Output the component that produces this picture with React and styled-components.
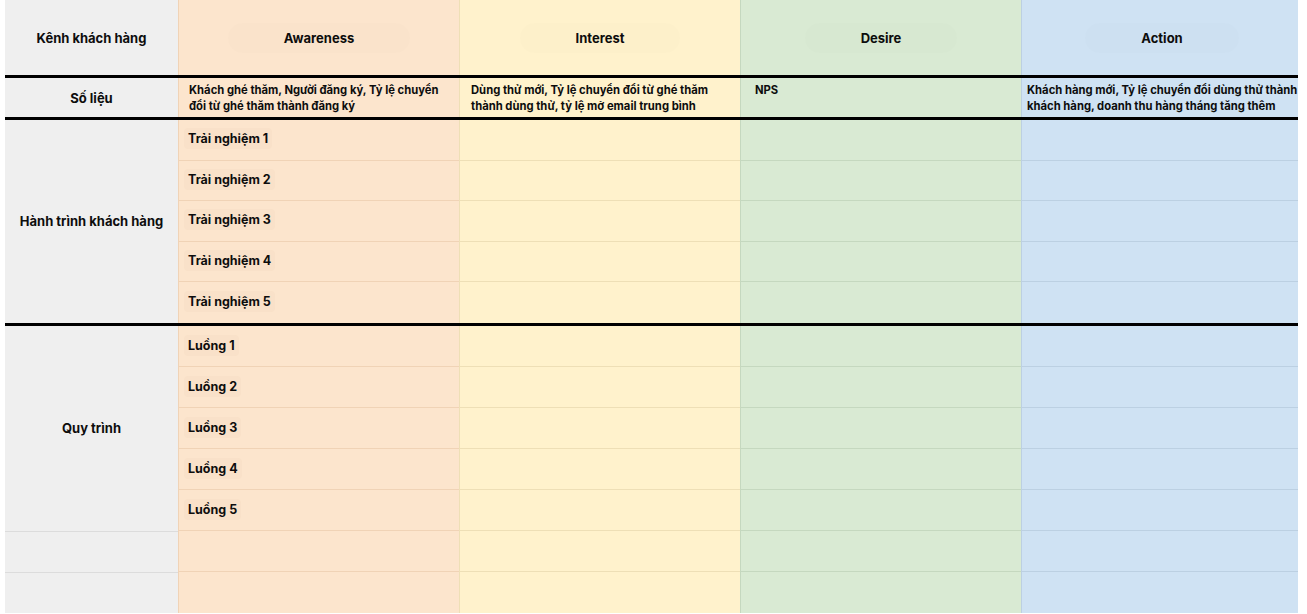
import React from 'react';
import styled, { createGlobalStyle } from 'styled-components';

const GlobalStyle = createGlobalStyle`
	html, body {
		margin: 0;
		padding: 0;
		background: #ffffff;
	}
	body {
		font-family: Inter, "Noto Sans", "Liberation Sans", sans-serif;
		color: #0d0d0d;
	}
`;

const STAGES = [
	{ name: 'Awareness', color: '#fce5cd', line: '#f0d3b6', metric: ['Khách ghé thăm, Người đăng ký, Tỷ lệ chuyển', 'đổi từ ghé thăm thành đăng ký'], pad: 10 },
	{ name: 'Interest', color: '#fff2cc', line: '#eedfb6', metric: ['Dùng thử mới, Tỷ lệ chuyển đổi từ ghé thăm', 'thành dùng thử, tỷ lệ mở email trung bình'], pad: 11 },
	{ name: 'Desire', color: '#d9ead3', line: '#c5d8bf', metric: ['NPS'], pad: 14 },
	{ name: 'Action', color: '#cfe2f3', line: '#bcd0e2', metric: ['Khách hàng mới, Tỷ lệ chuyển đổi dùng thử thành', 'khách hàng, doanh thu hàng tháng tăng thêm'], pad: 5 },
];

const JOURNEY = ['Trải nghiệm 1', 'Trải nghiệm 2', 'Trải nghiệm 3', 'Trải nghiệm 4', 'Trải nghiệm 5'];
const FLOWS = ['Luồng 1', 'Luồng 2', 'Luồng 3', 'Luồng 4', 'Luồng 5'];

const Page = styled.div`
	padding-left: 5px;
	width: 1293px;
	overflow: hidden;
`;

const Board = styled.div`
	display: grid;
	width: 1297px;
	grid-template-columns: 173px repeat(4, 281px);
	grid-template-rows: 75px 3px 39px 3px repeat(5, 40.6px) 3px repeat(7, 41px);
`;

const Divider = styled.div`
	grid-column: 1 / -1;
	background: #000000;
`;

const LabelCell = styled.div`
	grid-column: 1;
	grid-row: ${p => p.$row} / span ${p => p.$span || 1};
	background: #efefef;
	display: flex;
	align-items: center;
	justify-content: center;
	font-size: 13px;
	font-weight: 700;
	border-top: ${p => (p.$lined ? '1px solid #dcdcdc' : 'none')};
	box-sizing: border-box;
`;

const StageCell = styled.div`
	grid-column: ${p => p.$col};
	grid-row: ${p => p.$row};
	background: ${p => p.$color};
	border-left: 1px solid ${p => p.$line};
	border-bottom: ${p => (p.$lined ? `1px solid ${p.$line}` : 'none')};
	box-sizing: border-box;
	display: flex;
	align-items: center;
	min-width: 0;
`;

const HeaderCell = styled(StageCell)`
	justify-content: center;
`;

const HeaderTitle = styled.span`
	font-size: 13px;
	font-weight: 700;
	padding: 7px 56px;
	border-radius: 14px;
	background: rgba(0, 0, 0, 0.008);
`;

const MetricCell = styled(StageCell)`
	align-items: flex-start;
	padding: 5px 0 0 ${p => p.$pad}px;
`;

const MetricText = styled.div`
	font-size: 11.25px;
	font-weight: 700;
	line-height: 15.5px;
	white-space: nowrap;
`;

const StepChip = styled.span`
	margin-left: 5px;
	margin-bottom: ${p => p.$lift}px;
	padding: 3px 4px;
	border-radius: 4px;
	font-size: 12.5px;
	font-weight: 700;
	background: rgba(120, 80, 40, 0.025);
`;

function Section({ label, items, start, extra = 0, lift }) {
	const total = items.length + extra;
	return (
		<>
			<LabelCell $row={start} $span={items.length}>{label}</LabelCell>
			{Array.from({ length: extra }).map((_, i) => (
				<LabelCell key={`gap-${i}`} $row={start + items.length + i} $lined />
			))}
			{STAGES.map((stage, c) =>
				Array.from({ length: total }).map((_, r) => (
					<StageCell
						key={`${stage.name}-${r}`}
						$col={c + 2}
						$row={start + r}
						$color={stage.color}
						$line={stage.line}
						$lined={r < total - 1}
					>
						{c === 0 && items[r] && <StepChip $lift={lift}>{items[r]}</StepChip>}
					</StageCell>
				))
			)}
		</>
	);
}

export default function App() {
	return (
		<Page>
			<GlobalStyle />
			<Board>
				<LabelCell $row={1}>Kênh khách hàng</LabelCell>
				{STAGES.map((stage, c) => (
					<HeaderCell key={stage.name} $col={c + 2} $row={1} $color={stage.color} $line={stage.line}>
						<HeaderTitle>{stage.name}</HeaderTitle>
					</HeaderCell>
				))}
				<Divider style={{ gridRow: 2 }} />
				<LabelCell $row={3}>Số liệu</LabelCell>
				{STAGES.map((stage, c) => (
					<MetricCell key={stage.name} $col={c + 2} $row={3} $color={stage.color} $line={stage.line} $pad={stage.pad}>
						<MetricText>
							{stage.metric.map((line, i) => (
								<div key={i}>{line}</div>
							))}
						</MetricText>
					</MetricCell>
				))}
				<Divider style={{ gridRow: 4 }} />
				<Section label="Hành trình khách hàng" items={JOURNEY} start={5} lift={2} />
				<Divider style={{ gridRow: 10 }} />
				<Section label="Quy trình" items={FLOWS} start={11} extra={2} lift={0} />
			</Board>
		</Page>
	);
}
